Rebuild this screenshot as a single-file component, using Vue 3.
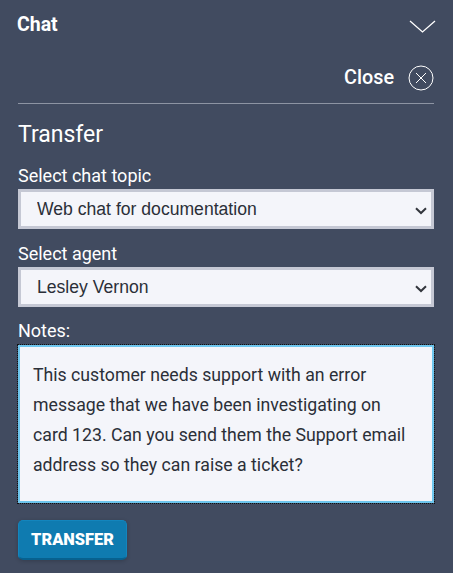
<template>
  <div class="panel">
    <header class="top">
      <span class="title">Chat</span>
      <svg class="chev" width="27" height="14" viewBox="0 0 27 14"><path d="M1 1 L13.5 12 L26 1" fill="none" stroke="#fff" stroke-width="1.3"/></svg>
    </header>
    <div class="closebar">
      <span class="close">Close</span>
      <svg class="xicon" width="26" height="26" viewBox="0 0 26 26"><circle cx="13" cy="13" r="12" fill="none" stroke="#fff" stroke-width="1"/><path d="M8 8 L18 18 M18 8 L8 18" stroke="#fff" stroke-width="1" fill="none"/></svg>
    </div>
    <form class="body" @submit.prevent>
      <h2>Transfer</h2>
      <label class="lbl">Select chat topic</label>
      <div class="selwrap">
        <select class="sel"><option>Web chat for documentation</option></select>
        <svg class="arrow" width="12" height="8" viewBox="0 0 12 8"><path d="M1 1.2 L6 6 L11 1.2" fill="none" stroke="#33363d" stroke-width="2"/></svg>
      </div>
      <label class="lbl second">Select agent</label>
      <div class="selwrap">
        <select class="sel"><option>Lesley Vernon</option></select>
        <svg class="arrow" width="12" height="8" viewBox="0 0 12 8"><path d="M1 1.2 L6 6 L11 1.2" fill="none" stroke="#33363d" stroke-width="2"/></svg>
      </div>
      <label class="lbl third">Notes:</label>
      <div class="notes">This customer needs support with an error<br>message that we have been investigating on<br>card 123. Can you send them the Support email<br>address so they can raise a ticket?</div>
      <button class="btn" type="button">TRANSFER</button>
    </form>
  </div>
</template>

<script setup>
</script>

<style>
html, body { margin: 0; background: #414b60; }
</style>

<style scoped>
.panel {
  width: 453px;
  height: 573px;
  background: #414b60;
  color: #fff;
  font-family: Roboto, "Liberation Sans", sans-serif;
  box-sizing: border-box;
  overflow: hidden;
}
.top {
  display: flex;
  justify-content: space-between;
  align-items: flex-start;
  padding: 14px 17px 0 17px;
  height: 48px;
  box-sizing: border-box;
}
.title { font-size: 19.5px; font-weight: 700; line-height: 21px; }
.chev { margin-top: 6px; }
.closebar {
  display: flex;
  justify-content: flex-end;
  align-items: center;
  gap: 14px;
  height: 56px;
  margin: 0 19px 0 18px;
  padding-top: 4px;
  box-sizing: border-box;
  border-bottom: 1px solid #8d94a3;
}
.close { font-size: 19.8px; font-weight: 500; }
.xicon { margin-top: 1px; }
.body { padding: 0 19px 0 18px; display: flex; flex-direction: column; align-items: flex-start; }
h2 { margin: 18px 0 0; font-size: 23px; font-weight: 400; line-height: 26px; }
.lbl { font-size: 18px; line-height: 20px; margin-top: 18px; color: #fff; }
.lbl.second { margin-top: 15px; }
.lbl.third { margin-top: 14px; }
.selwrap { position: relative; margin-top: 3px; width: 416px; height: 40px; }
.third + .notes { margin-top: 4px; }
.sel {
  display: block;
  appearance: none;
  width: 416px;
  height: 40px;
  border: 3px solid #c5c8d4;
  border-radius: 0;
  background-color: #f4f5fa;
  color: #2b2f38;
  font-family: "Liberation Sans", Arial, sans-serif;
  font-size: 17.6px;
  padding: 0 0 0 16px;
  box-sizing: border-box;
}
.arrow { position: absolute; right: 7px; top: 18px; pointer-events: none; }
.notes {
  width: 416px;
  height: 158px;
  box-sizing: border-box;
  background: #f4f5fa;
  border: 2px solid #6ec6ee;
  outline: 1px dotted #111;
  padding: 13px 13px;
  color: #2b2f38;
  font-size: 17.7px;
  line-height: 30px;
}
.btn {
  margin-top: 17px;
  width: 109px;
  height: 40px;
  box-sizing: border-box;
  background: #0f7bb0;
  border: 1px solid #1385bd;
  border-bottom: 2px solid #07618f;
  border-radius: 5px;
  color: #fff;
  font-family: Roboto, "Liberation Sans", sans-serif;
  font-size: 16.4px;
  font-weight: 900;
  padding: 0;
  box-shadow: 0 1px 4px rgba(0,0,0,.2);
}
</style>
